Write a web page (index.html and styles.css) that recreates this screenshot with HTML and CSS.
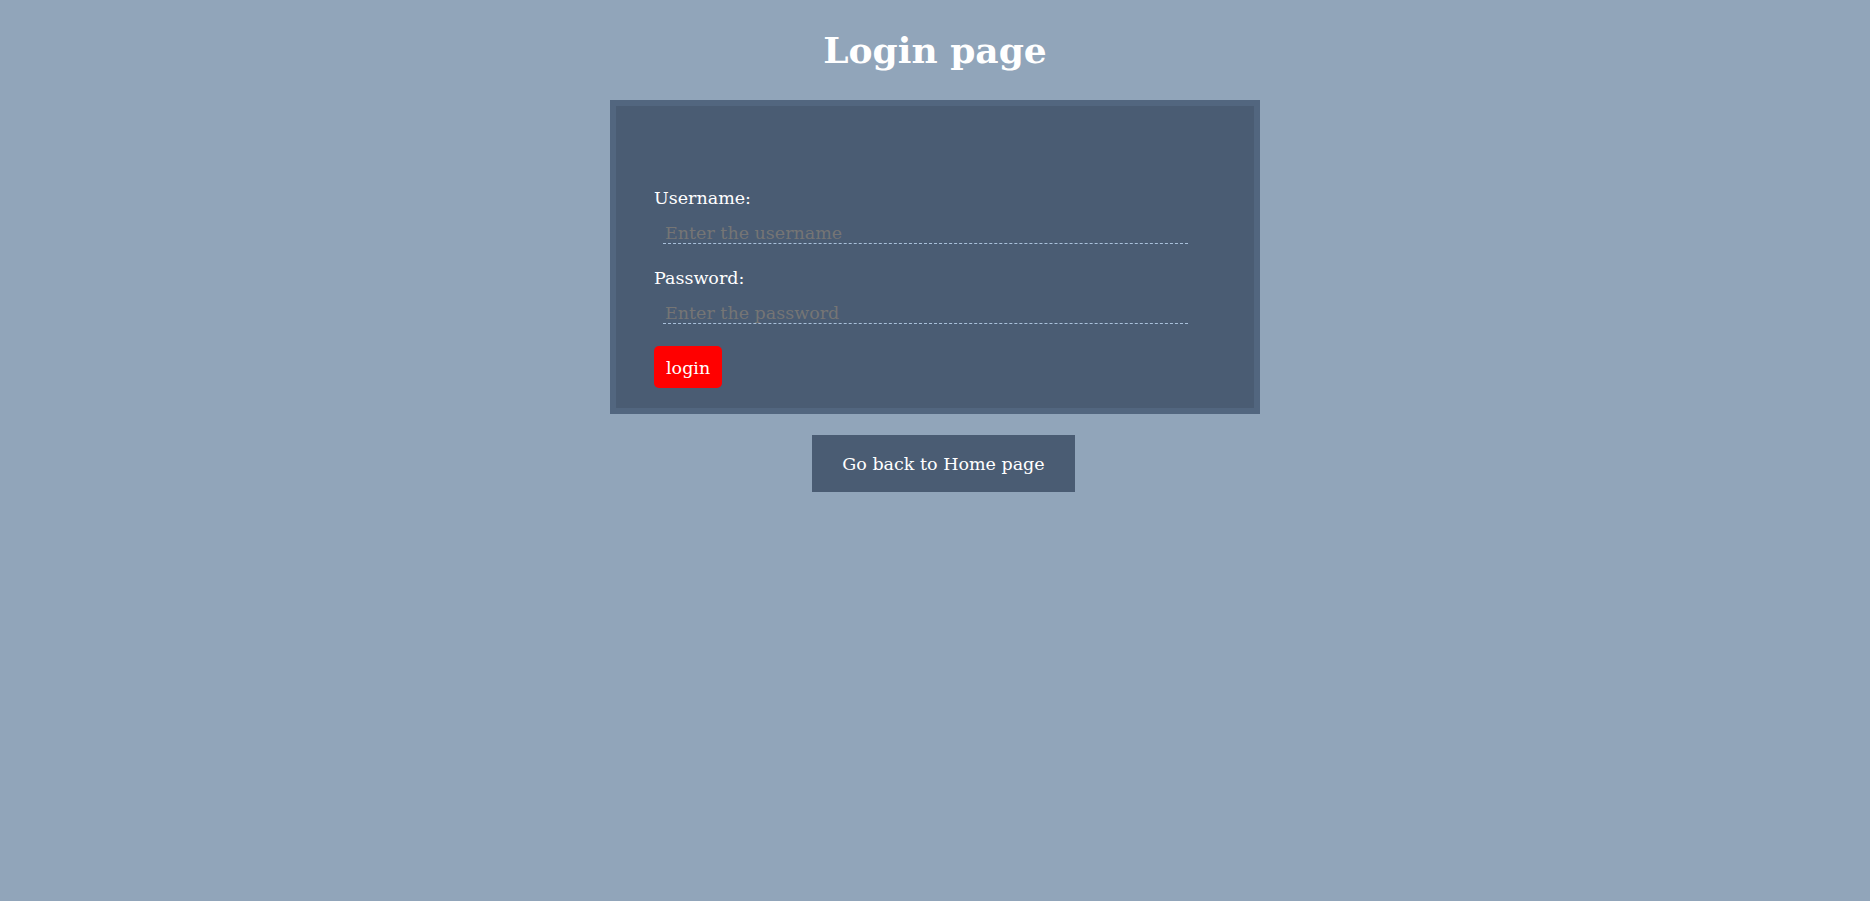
FILE: index.html
```html
<!DOCTYPE html>
<html lang="en">
<head>
<meta charset="utf-8">
<title>Login page</title>
<link rel="stylesheet" href="styles.css">
</head>
<body>
<h1 class="title">Login page</h1>
<div class="card">
  <form class="login-form">
    <label class="field-label" for="username">Username:</label>
    <input class="field-input" id="username" type="text" placeholder="Enter the username">
    <label class="field-label field-label--second" for="password">Password:</label>
    <input class="field-input" id="password" type="password" placeholder="Enter the password">
    <div class="actions">
      <button class="login-btn" type="button">login</button>
    </div>
  </form>
</div>
<div class="back-row">
  <a class="back-btn" href="#">Go back to Home page</a>
</div>
</body>
</html>
```

FILE: styles.css
```css
html, body {
  margin: 0;
  padding: 0;
}
body {
  background: #91a5ba;
  font-family: "DejaVu Serif", Georgia, serif;
  color: #ffffff;
  min-height: 901px;
}
.title {
  margin: 29px 0 29px;
  text-align: center;
  font-size: 36px;
  font-weight: bold;
  line-height: normal;
  color: #ffffff;
}
.card {
  box-sizing: border-box;
  width: 650px;
  margin: 0 auto;
  border: 6px solid #52667f;
  background: #4a5c73;
  padding: 82px 38px 20px;
}
.login-form {
  display: flex;
  flex-direction: column;
  align-items: flex-start;
}
.field-label {
  font-size: 17.5px;
  line-height: 20px;
  color: #ffffff;
}
.field-label--second {
  margin-top: 24px;
}
.field-input {
  box-sizing: border-box;
  margin: 11px 0 0 9px;
  width: 525px;
  height: 25px;
  padding: 4px 2px 0;
  border: none;
  border-bottom: 1px dashed #a9c0da;
  background: transparent;
  font-family: "DejaVu Serif", Georgia, serif;
  font-size: 17.5px;
  line-height: 20px;
  color: #ffffff;
  outline: none;
}
.field-input::placeholder {
  color: #757575;
}
.actions {
  margin-top: 22px;
}
.login-btn {
  border: none;
  border-radius: 5px;
  background: #ff0000;
  color: #ffffff;
  font-family: "DejaVu Serif", Georgia, serif;
  font-size: 17.5px;
  line-height: 20px;
  padding: 12px 12px 10px;
  cursor: pointer;
}
.back-row {
  display: flex;
  justify-content: center;
  padding-left: 17px;
  margin-top: 21px;
}
.back-btn {
  display: block;
  background: #4a5c73;
  color: #ffffff;
  text-decoration: none;
  font-size: 17.5px;
  line-height: 20px;
  padding: 19px 30px 18px;
}
```
